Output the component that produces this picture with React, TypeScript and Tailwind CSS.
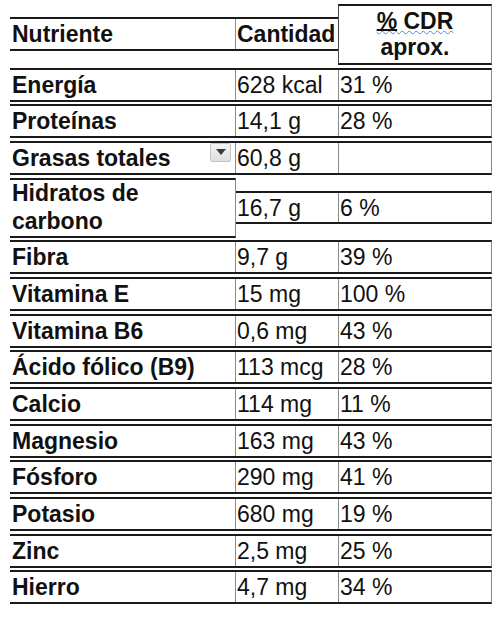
import React from "react";

type Row = [string, string, string];

const topRows: Row[] = [
  ["Energía", "628 kcal", "31 %"],
  ["Proteínas", "14,1 g", "28 %"],
];

const bottomRows: Row[] = [
  ["Fibra", "9,7 g", "39 %"],
  ["Vitamina E", "15 mg", "100 %"],
  ["Vitamina B6", "0,6 mg", "43 %"],
  ["Ácido fólico (B9)", "113 mcg", "28 %"],
  ["Calcio", "114 mg", "11 %"],
  ["Magnesio", "163 mg", "43 %"],
  ["Fósforo", "290 mg", "41 %"],
  ["Potasio", "680 mg", "19 %"],
  ["Zinc", "2,5 mg", "25 %"],
  ["Hierro", "4,7 mg", "34 %"],
];

function DataRow({ row, dropdown }: { row: Row; dropdown?: boolean }) {
  return (
    <div className="flex w-[482px] h-[34px] border-y-2 border-r border-y-[#1a1a1a] border-r-[#8a8a8a]">
      <div className="relative w-[226px] border-r border-[#8a8a8a] flex items-center pl-[2px] font-bold leading-[26px]">
        {row[0]}
        {dropdown && (
          <div className="absolute right-[4px] top-[0px] w-[21px] h-[19px] rounded-[2px] border border-[#c4c4c4] bg-gradient-to-b from-[#f4f4f4] to-[#e0e0e0] flex items-center justify-center">
            <svg width="10" height="6" viewBox="0 0 10 6">
              <path d="M0 0 H10 L5 6 Z" fill="#3a3a3a" />
            </svg>
          </div>
        )}
      </div>
      <div className="w-[103px] border-r border-[#8a8a8a] flex items-center pl-[1px] leading-[26px]">
        {row[1]}
      </div>
      <div className="flex-1 flex items-center pl-[1px] leading-[26px]">{row[2]}</div>
    </div>
  );
}

export default function App() {
  return (
    <div className="w-[500px] h-[617px] bg-white pl-[10px] pt-[4px] text-[23px] text-[#111] font-['Liberation_Sans',Arial,sans-serif]">
      {/* Header */}
      <div className="flex w-[482px] h-[61px]">
        <div className="flex w-[328px] h-[34px] mt-[13px] border-y-2 border-[#1a1a1a]">
          <div className="w-[226px] border-r border-[#8a8a8a] flex items-center pl-[2px] font-bold leading-[26px]">
            Nutriente
          </div>
          <div className="flex-1 flex items-center pl-[1px] font-bold leading-[26px]">Cantidad</div>
        </div>
        <div className="w-[154px] h-[61px] border-y-2 border-x border-y-[#1a1a1a] border-l-[#444] border-r-[#8a8a8a] flex flex-col items-center justify-center font-bold leading-[25.7px] text-center">
          <span className="underline decoration-wavy decoration-[#5a86d6] decoration-1 underline-offset-[1px]">
            <span className="underline decoration-solid decoration-[#111] underline-offset-[0px]">%</span> CDR
          </span>
          <span>aprox.</span>
        </div>
      </div>

      <div className="flex flex-col gap-[2.67px] mt-[2.67px]">
        {topRows.map((r) => (
          <DataRow key={r[0]} row={r} />
        ))}
        <DataRow row={["Grasas totales", "60,8 g", ""]} dropdown />

        {/* Hidratos de carbono */}
        <div className="flex w-[482px] h-[60px]">
          <div className="w-[226px] border-y-2 border-r border-y-[#1a1a1a] border-r-[#8a8a8a] flex items-center pl-[2px] font-bold leading-[27.5px]">
            <span>
              Hidratos de
              <br />
              carbono
            </span>
          </div>
          <div className="flex-1 flex items-center">
            <div className="flex w-full h-[33px] border-y-2 border-r border-y-[#1a1a1a] border-r-[#8a8a8a]">
              <div className="w-[103px] border-r border-[#8a8a8a] flex items-center pl-[1px] leading-[26px]">
                16,7 g
              </div>
              <div className="flex-1 flex items-center pl-[1px] leading-[26px]">6 %</div>
            </div>
          </div>
        </div>

        {bottomRows.map((r) => (
          <DataRow key={r[0]} row={r} />
        ))}
      </div>
    </div>
  );
}
